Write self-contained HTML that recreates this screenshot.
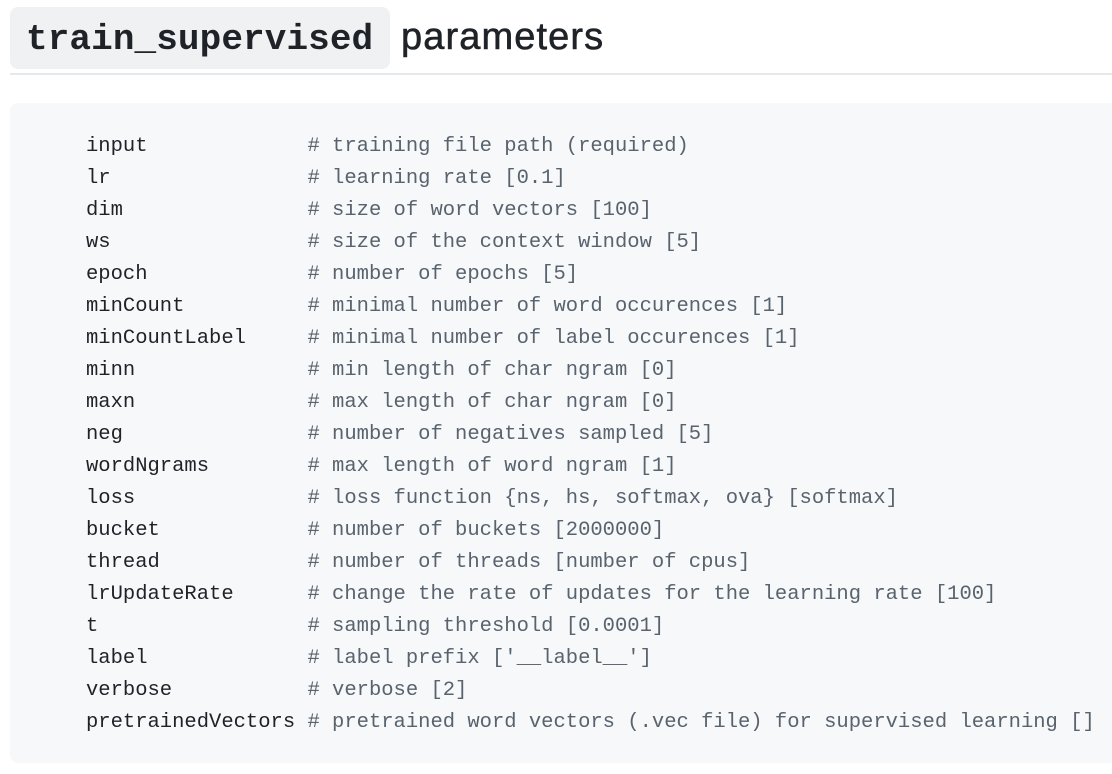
<!DOCTYPE html>
<html><head><meta charset="utf-8"><style>
html,body{margin:0;padding:0;background:#fff;width:1112px;height:774px;overflow:hidden}
.h{position:absolute;left:10px;top:7px;height:62px;width:380px;background:#eff1f3;border-radius:8px}
.h span{position:absolute;left:16px;top:10px;font:bold 36px/46px "Liberation Mono",monospace;color:#1f2328;letter-spacing:0.1px}
.p{position:absolute;left:401px;top:14px;font:normal 38px/46px "Liberation Sans",sans-serif;color:#1f2328;-webkit-text-stroke:0.6px #1f2328;letter-spacing:1.1px}
.hr{position:absolute;left:10px;top:73px;width:1102px;height:2px;background:#e6e9ec}
.c{position:absolute;left:10px;top:103px;width:1120px;height:660px;background:#f6f8fa;border-radius:8px}
pre{position:absolute;left:86px;top:131px;margin:0;font:20.5px/32px "Liberation Mono",monospace;color:#1f2328}
.g{color:#59636e}
</style></head><body>
<div class="h"><span>train_supervised</span></div>
<div class="p">parameters</div>
<div class="hr"></div>
<div class="c"></div>
<pre>input             <span class="g"># training file path (required)</span>
lr                <span class="g"># learning rate [0.1]</span>
dim               <span class="g"># size of word vectors [100]</span>
ws                <span class="g"># size of the context window [5]</span>
epoch             <span class="g"># number of epochs [5]</span>
minCount          <span class="g"># minimal number of word occurences [1]</span>
minCountLabel     <span class="g"># minimal number of label occurences [1]</span>
minn              <span class="g"># min length of char ngram [0]</span>
maxn              <span class="g"># max length of char ngram [0]</span>
neg               <span class="g"># number of negatives sampled [5]</span>
wordNgrams        <span class="g"># max length of word ngram [1]</span>
loss              <span class="g"># loss function {ns, hs, softmax, ova} [softmax]</span>
bucket            <span class="g"># number of buckets [2000000]</span>
thread            <span class="g"># number of threads [number of cpus]</span>
lrUpdateRate      <span class="g"># change the rate of updates for the learning rate [100]</span>
t                 <span class="g"># sampling threshold [0.0001]</span>
label             <span class="g"># label prefix ['__label__']</span>
verbose           <span class="g"># verbose [2]</span>
pretrainedVectors <span class="g"># pretrained word vectors (.vec file) for supervised learning []</span></pre>
</body></html>
